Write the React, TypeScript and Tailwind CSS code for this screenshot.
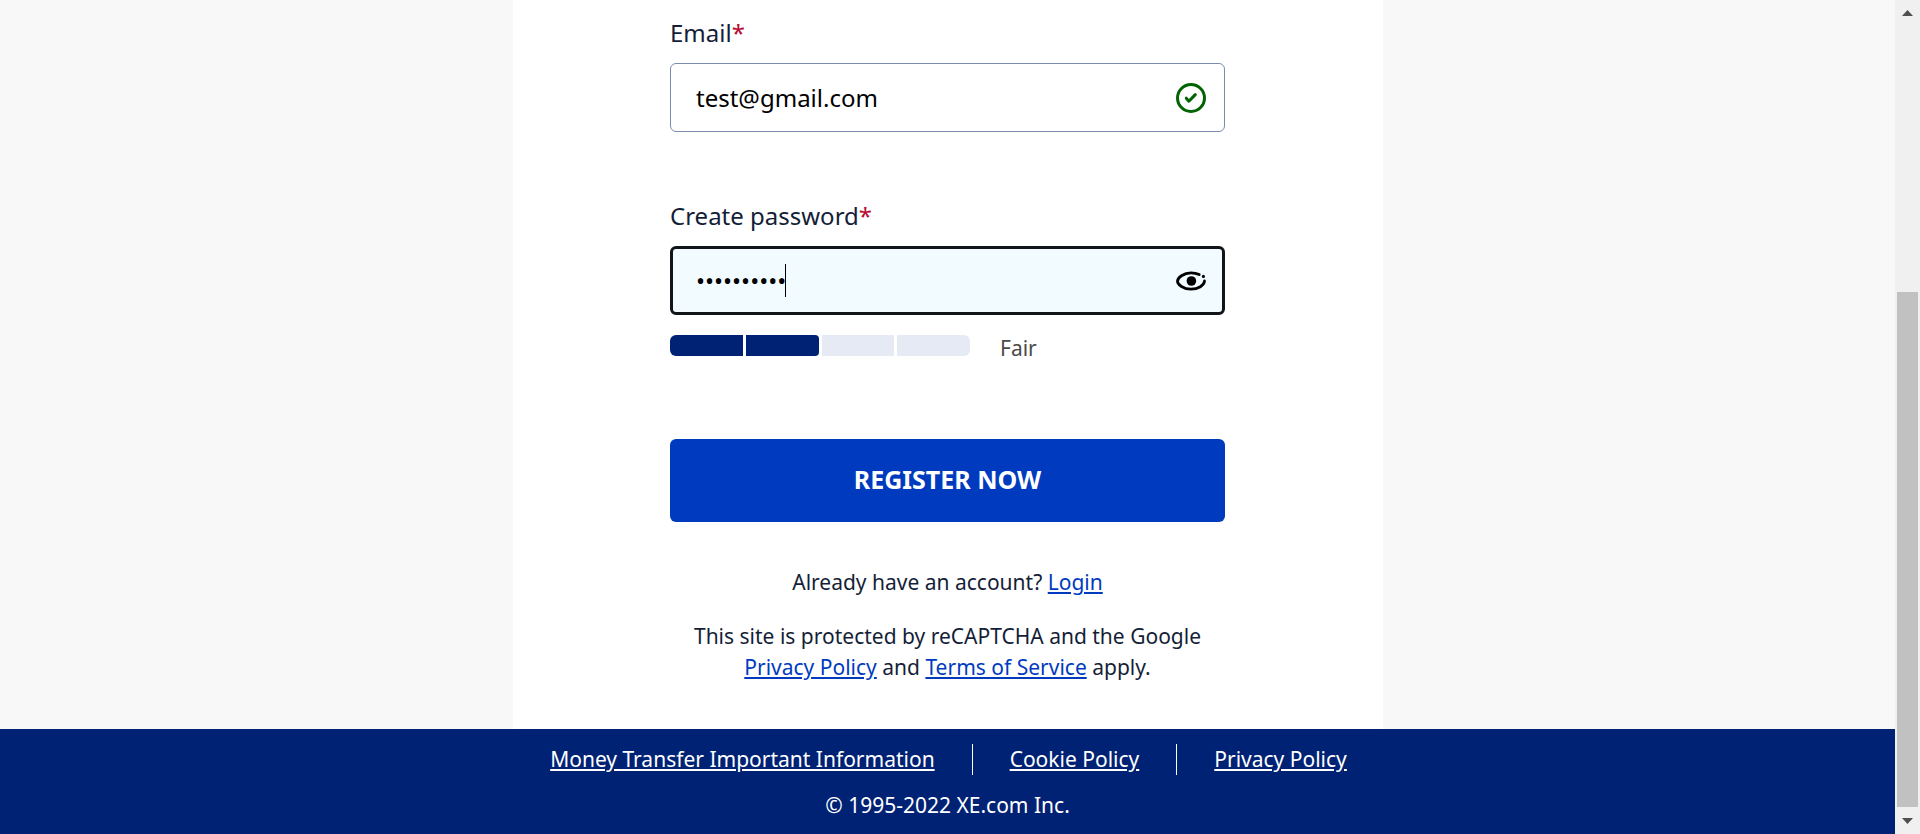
import React from "react";

const STRENGTH_LEVEL = 2;

function FieldLabel({ htmlFor, children }: { htmlFor: string; children: React.ReactNode }) {
  return (
    <label htmlFor={htmlFor} className="text-2xl leading-8 text-[#141e37]">
      {children}
      <span className="text-[#b80c31]">*</span>
    </label>
  );
}

function CheckIcon() {
  return (
    <svg viewBox="0 0 30 30" className="size-[30px]" fill="none" stroke="#006400" aria-hidden="true">
      <circle cx="15" cy="15" r="13.5" strokeWidth="3" />
      <path d="M10.3 15.2l2.6 3 6.4-6.6" strokeWidth="3" strokeLinecap="round" strokeLinejoin="round" />
    </svg>
  );
}

function EyeIcon() {
  return (
    <svg viewBox="0 0 30 30" className="size-[30px]" fill="none" aria-hidden="true">
      <path
        d="M23.2 8.6C20.8 7.4 18 6.8 15 6.8C7.6 6.8 1.5 11.8 1.5 15.2C1.5 18.6 7.6 23.2 15 23.2C22.4 23.2 28.2 19.4 28.5 15"
        stroke="#000"
        strokeWidth="2.8"
        strokeLinecap="round"
      />
      <circle cx="15.4" cy="15" r="4.8" fill="#000" />
      <circle cx="27.4" cy="10.4" r="1.6" fill="#000" />
    </svg>
  );
}

function StrengthMeter({ level }: { level: number }) {
  return (
    <div className="flex h-[21px] w-[300px] gap-[3px] overflow-hidden rounded-md">
      {[1, 2, 3, 4].map((step) => (
        <span
          key={step}
          className={
            step < level
              ? "flex-1 bg-[#002274]"
              : step === level
                ? "flex-1 rounded-r bg-[#002274]"
                : "flex-1 bg-[#e6eaf5]"
          }
        />
      ))}
    </div>
  );
}

function TextLink({ children }: { children: React.ReactNode }) {
  return (
    <a href="#" className="text-[#003bbf] underline decoration-2 underline-offset-2">
      {children}
    </a>
  );
}

function RegisterForm() {
  return (
    <form className="flex flex-col" onSubmit={(e) => e.preventDefault()}>
      <FieldLabel htmlFor="email">Email</FieldLabel>
      <div className="relative mt-[14px]">
        <input
          id="email"
          type="email"
          defaultValue="test@gmail.com"
          className="h-[69px] w-full rounded-md border border-[#7c8bb0] bg-white pr-16 pl-[25px] text-2xl text-black outline-none"
        />
        <span className="absolute inset-y-0 right-[19px] flex items-center">
          <CheckIcon />
        </span>
      </div>

      <div className="mt-[68px] flex flex-col">
        <FieldLabel htmlFor="password">Create password</FieldLabel>
      </div>
      <div className="relative mt-[14px]">
        <input
          id="password"
          type="password"
          defaultValue="password12"
          className="h-[69px] w-full rounded-md border-[3px] border-[#111418] bg-[#f2fbff] pr-16 pl-[23px] text-2xl text-black outline-none"
        />
        <span className="absolute top-[18px] left-[115px] h-[33px] w-px bg-black" />
        <button
          type="button"
          aria-label="Show password"
          className="absolute inset-y-0 right-[19px] flex items-center"
        >
          <EyeIcon />
        </button>
      </div>

      <div className="mt-5 flex items-start gap-[30px]">
        <StrengthMeter level={STRENGTH_LEVEL} />
        <span className="text-[21px] leading-[27px] text-[#4a4a4a]">Fair</span>
      </div>

      <button
        type="submit"
        className="mt-[77px] h-[83px] rounded-md bg-[#003bbf] pb-0.5 text-[25px] font-bold text-white"
      >
        REGISTER NOW
      </button>

      <p className="mt-[45px] text-center text-[21px] leading-[31px] text-[#141e37]">
        Already have an account? <TextLink>Login</TextLink>
      </p>
      <p className="mt-[23px] text-center text-[21px] leading-[31px] text-[#141e37]">
        This site is protected by reCAPTCHA and the Google <TextLink>Privacy Policy</TextLink> and{" "}
        <TextLink>Terms of Service</TextLink> apply.
      </p>
    </form>
  );
}

function Footer() {
  const link = "underline decoration-2 underline-offset-2";
  return (
    <footer className="flex flex-col items-center gap-[15px] bg-[#002274] pt-[15px] pb-[13px] text-[21px] leading-[31px] text-white">
      <nav className="flex pl-0.5">
        <a href="#" className={link}>Money Transfer Important Information</a>
        <span className="mx-[37px] w-px bg-white" />
        <a href="#" className={link}>Cookie Policy</a>
        <span className="mx-[37px] w-px bg-white" />
        <a href="#" className={link}>Privacy Policy</a>
      </nav>
      <p>© 1995-2022 XE.com Inc.</p>
    </footer>
  );
}

function ScrollBar() {
  return (
    <div className="flex w-[25px] shrink-0 flex-col items-center bg-[#f0f0f0]" aria-hidden="true">
      <svg viewBox="0 0 11 6" className="mt-[10px] h-[6px] w-[11px]" fill="#505050">
        <path d="M5.5 0L11 6H0z" />
      </svg>
      <div className="flex-[276]" />
      <div className="w-[21px] flex-[515] bg-[#c1c1c1]" />
      <svg viewBox="0 0 11 6" className="mt-[11px] mb-[10px] h-[6px] w-[11px]" fill="#505050">
        <path d="M0 0H11L5.5 6z" />
      </svg>
    </div>
  );
}

export default function App() {
  return (
    <div className="flex min-h-screen font-['Noto_Sans',sans-serif]">
      <div className="flex min-w-0 flex-1 flex-col bg-[#f8f8f8]">
        <main className="mx-auto w-full max-w-[870px] flex-1 bg-white px-6 pt-[17px] pb-10">
          <div className="mx-auto max-w-[555px]">
            <RegisterForm />
          </div>
        </main>
        <Footer />
      </div>
      <ScrollBar />
    </div>
  );
}
